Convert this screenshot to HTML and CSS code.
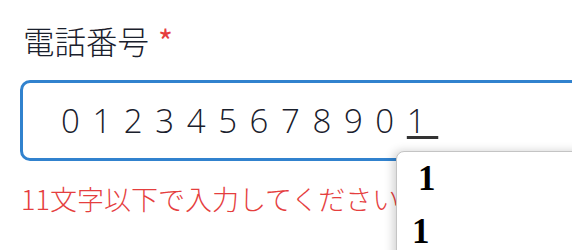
FILE: index.html
```html
<!DOCTYPE html>
<html lang="ja">
<head>
<meta charset="utf-8">
<link rel="stylesheet" href="styles.css">
</head>
<body>
<div class="field">
  <div class="label">電話番号<span class="req">*</span></div>
  <div class="input"><span class="digits">01234567890</span><span class="comp">1</span></div>
  <div class="error">11文字以下で入力してください</div>
</div>
<div class="ime">
  <div class="cand first">1</div>
  <div class="cand second">1</div>
</div>
</body>
</html>
```
FILE: styles.css
```css
html, body {
  margin: 0;
  padding: 0;
  background: #ffffff;
  overflow: hidden;
  width: 572px;
  height: 250px;
}
body {
  font-family: "Noto Sans CJK JP", "Noto Sans", sans-serif;
  color: #1a202c;
  position: relative;
}
.field {
  padding: 17px 0 0 20px;
}
.label {
  font-size: 31.5px;
  line-height: 46px;
  height: 46px;
  padding-left: 3px;
  font-weight: 300;
  color: #1a202c;
  white-space: nowrap;
}
.req {
  color: #e53e3e;
  margin-left: 9px;
  font-size: 32px;
  font-weight: 400;
}
.input {
  margin-top: 17px;
  width: 700px;
  height: 75px;
  border: 3px solid #3182ce;
  border-radius: 10px;
  box-sizing: content-box;
  padding-left: 38px;
  display: flex;
  align-items: center;
  font-family: "Open Sans", "Noto Sans CJK JP", sans-serif;
  font-weight: 300;
  font-size: 33px;
  letter-spacing: 12.6px;
  color: #1a202c;
  white-space: nowrap;
}
.comp {
  text-decoration: underline;
  text-decoration-color: #333333;
  text-decoration-thickness: 3px;
  text-underline-offset: 3px;
}
.error {
  margin-top: 19px;
  padding-left: 1px;
  font-size: 27px;
  line-height: 38px;
  color: #e53e3e;
  font-weight: 300;
  white-space: nowrap;
}
.ime {
  position: absolute;
  left: 396px;
  top: 151px;
  width: 300px;
  height: 200px;
  background: #ffffff;
  border: 1px solid #c4c4c4;
  border-radius: 8px;
  box-shadow: -3px 0 10px rgba(0, 0, 0, 0.18);
  font-family: "Liberation Serif", serif;
  font-weight: bold;
  font-size: 35px;
  color: #000000;
}
.cand {
  height: 53px;
  line-height: 53px;
}
.cand.first {
  padding-left: 21px;
}
.cand.second {
  padding-left: 15px;
}
```
